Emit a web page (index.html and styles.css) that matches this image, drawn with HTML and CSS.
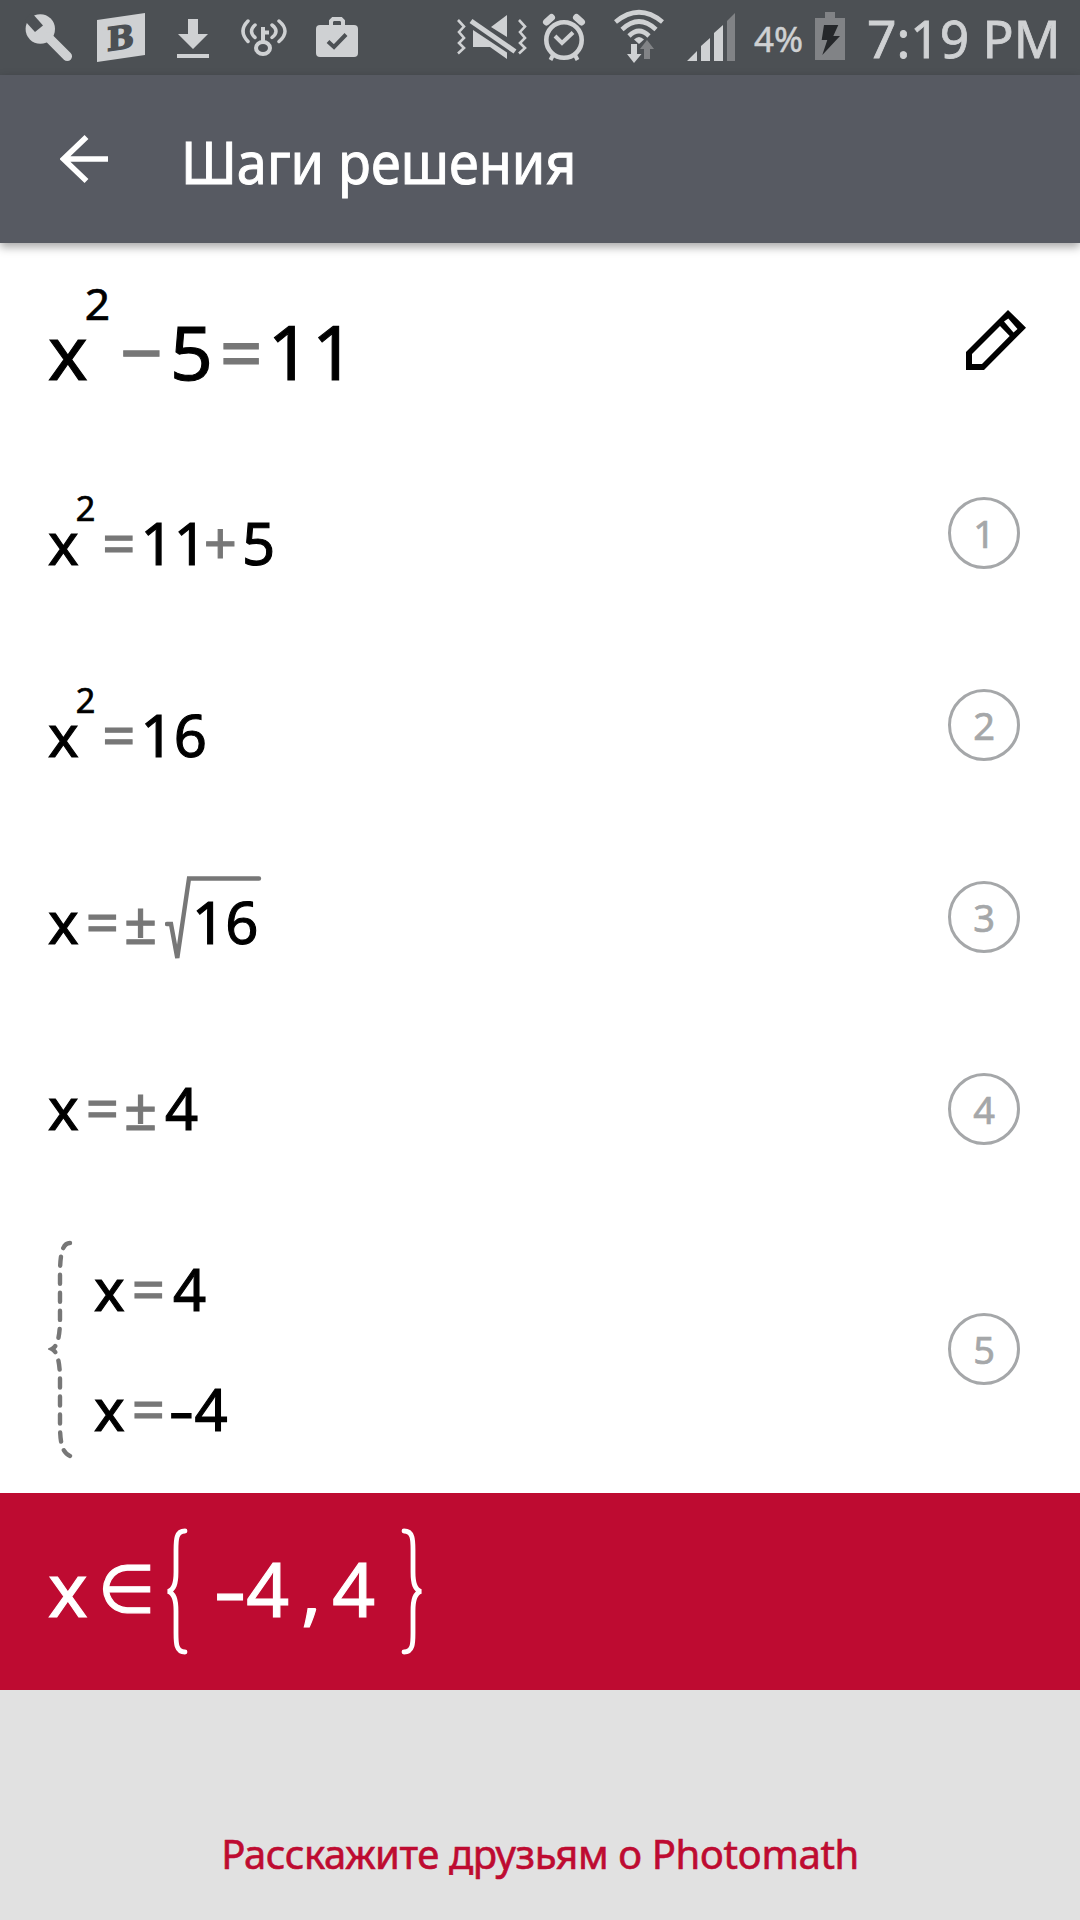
FILE: index.html
```html
<!DOCTYPE html>
<html lang="ru">
<head>
  <meta charset="UTF-8" />
  <meta name="viewport" content="width=device-width, initial-scale=1.0" />
  <title>Шаги решения</title>
  <link rel="stylesheet" href="styles.css">
</head>
<body>
  <div id="app">
    <div class="status">
      <svg class="i-wrench" viewBox="25 0 48 75">
        <circle cx="40.3" cy="29" r="14.7"/>
        <path class="cut" d="M24 20L35 32L43 25.5L32 13Z"/>
        <path class="line" stroke-width="9.5" stroke-linecap="round" d="M48 37L67.3 56.3"/>
      </svg>
      <svg class="i-b" viewBox="97 0 48 75">
        <path d="M97 20L145 13V55L97 62Z"/>
        <text class="cut" x="107" y="50.500" transform="matrix(1 -.14 0 1 0 15.6)">B</text>
      </svg>
      <svg class="i-down" viewBox="177 0 32 75">
        <path d="M188 19h10v15h10L193 49L178 34h10ZM177 54h32v4h-32Z"/>
      </svg>
      <svg class="i-key" viewBox="240 0 48 75">
        <ellipse class="line" stroke-width="4" cx="263" cy="48" rx="7" ry="6"/>
        <path class="line" stroke-width="4" d="M263 43V27M263 32.5H269"/>
        <path class="line" stroke-width="3.5" stroke-linecap="round" d="M248 21Q238 31 248 41.500M255 25Q248 31 255 37.500M279 21Q291 31 279 41.500M272 25Q280 31 272 37.500"/>
      </svg>
      <svg class="i-bag" viewBox="316 0 42 75">
        <rect x="316" y="25" width="42" height="32" rx="4"/>
        <path class="line" stroke-width="4" d="M331 26V21L333 19H341L343 21V26"/>
        <path class="line dark" stroke-width="4" d="M328 41.500L334 47L346 34.500"/>
      </svg>

      <svg class="i-mute" viewBox="456 0 72 75">
        <path class="line" stroke-width="2.6" d="M458 20L464 26.500L459 32L464 38L459 43L464 48L458 53.500M519 20L525 26.500L520 32L525 38L520 43L525 48L519 53.500"/>
        <path d="M491 27L507 15V37ZM473 30V47H490L507 59V52.500Z"/>
        <path class="line" stroke-width="5" d="M471 21L515 51.500"/>
      </svg>
      <svg class="i-alarm" viewBox="541 0 46 75">
        <circle class="line" stroke-width="4.6" cx="564" cy="40" r="17.7"/>
        <path class="line" stroke-width="4" d="M555 36L562 43L573 32.500M553.500 54L550.500 60M574.500 54L577.500 60"/>
        <path class="line" stroke-width="7" stroke-linecap="round" d="M546.500 22L551.500 17.500M581.500 22L576.500 17.500"/>
      </svg>
      <svg class="i-wifi" viewBox="613 0 52 75">
        <path class="line" stroke-width="4.6" d="M615.500 22Q639 2.500 662.500 22M622 29.500Q639 13.500 656 29.500M629 36Q639 26 649 36"/>
        <path d="M634 39.500Q639 34.500 644 39.500L639 44Z"/>
        <path d="M631 44h6v10h4.500L634 63L627 54h4Z"/>
        <path class="dim" d="M647 40L654 49h-4v10h-6V49h-4Z"/>
      </svg>
      <svg class="i-signal" viewBox="686 0 50 75">
        <path d="M687 61L697 51V61ZM701 61V46L710 38V61ZM714 61V33L723 25V61Z"/>
        <path class="dim" d="M727 61V21L735 13V61Z"/>
      </svg>
      <span class="percent">4%</span>
      <svg class="i-battery" viewBox="815 0 30 75">
        <path class="dim" d="M825 12h10v6h10v42h-30V18h10Z"/>
        <path class="bolt" d="M824 25H838.300L833.300 36H840L822.300 55L827.300 40H821.700Z"/>
      </svg>
      <span class="clock">7:19 PM</span>
    </div>

    <div class="appbar">
      <svg class="back" viewBox="60 134 48 50">
        <path d="M86.500 137L63.500 159L86.500 181M63.500 159H108"/>
      </svg>
      <h1>Шаги решения</h1>
    </div>

    <div class="row problem">
      <div class="math big"><span>x</span><span class="sup">2</span><span class="op minus">−</span><span>5</span><span class="op">=</span><span class="num">11</span></div>
      <svg class="pencil" viewBox="966 310 60 60">
        <path fill-rule="evenodd" d="M1008 310L1026 327.700L984 370H966V352ZM972 354V364H982L1009.700 336L1000 326ZM1004 321.500L1013.500 332.500L1017.500 329L1008.300 318.500Z"/>
      </svg>
    </div>

    <div class="row step low">
      <div class="math"><span>x</span><span class="sup">2</span><span class="op">=</span><span>11</span><span class="op plus">+</span><span>5</span></div>
      <div class="badge">1</div>
    </div>
    <div class="row step low">
      <div class="math"><span>x</span><span class="sup">2</span><span class="op">=</span><span>16</span></div>
      <div class="badge">2</div>
    </div>
    <div class="row step mid">
      <div class="math"><span>x</span><span class="op">=</span><span class="op pm">±</span><svg class="root" viewBox="165 873 97 88">
          <path d="M167 923H171L177.300 957L189 877.500H259"/>
        </svg><span class="radicand">16</span></div>
      <div class="badge">3</div>
    </div>
    <div class="row step">
      <div class="math"><span>x</span><span class="op">=</span><span class="op pm">±</span><span class="four">4</span></div>
      <div class="badge">4</div>
    </div>
    <div class="row step system">
      <svg class="dashed" viewBox="48 1239 26 220">
        <path d="M70 1243C62 1243 60 1255 60 1275V1318C60 1335 58 1346 52 1349C58 1352 60 1365 60 1380V1425C60 1445 63 1453 70 1456"/>
      </svg>
      <div class="cases">
        <div class="math"><span>x</span><span class="op">=</span><span class="four">4</span></div>
        <div class="math"><span>x</span><span class="op">=</span><span class="neg">-</span><span>4</span></div>
      </div>
      <div class="badge">5</div>
    </div>

    <div class="row result">
      <div class="math big"><span>x</span><span class="in">∈</span></div>
      <svg class="brace" viewBox="166 1528 24 127">
        <path d="M186 1531C177 1531 177 1540 177 1550V1572C177 1584 175 1590 169 1591.500C175 1593 177 1599 177 1611V1633C177 1643 177 1652 186 1652"/>
      </svg>
      <div class="math big set"><span class="neg">-</span><span>4</span><span class="comma">,</span><span>4</span></div>
      <svg class="brace" viewBox="400 1528 24 127">
        <path d="M404 1531C413 1531 413 1540 413 1550V1572C413 1584 415 1590 421 1591.500C415 1593 413 1599 413 1611V1633C413 1643 413 1652 404 1652"/>
      </svg>
    </div>

    <div class="share"><span>Расскажите друзьям о Photomath</span></div>
  </div>
</body>
</html>
```
FILE: styles.css
```css
:root {
  --status: #4c5054;
  --bar: #575a62;
  --icon: #cfd1d3;
  --dim: #818386;
  --op: #777;
  --badge: #a5a7a9;
  --red: #be0b31;
}
body {
  margin: 0;
  font-family: "Noto Sans", sans-serif;
  background: #fff;
  color: #000;
}
#app {
  width: 1080px;
  height: 1920px;
  display: flex;
  flex-direction: column;
  overflow: hidden;
}
svg {
  display: block;
  flex: none;
}

/* status bar */
.status {
  height: 75px;
  flex: none;
  display: flex;
  background: var(--status);
  color: var(--icon);
  line-height: 75px;
  white-space: nowrap;
}
.status svg {
  height: 75px;
  fill: var(--icon);
}
.status .line {
  fill: none;
  stroke: var(--icon);
}
.status .cut {
  fill: var(--status);
}
.status .dark {
  stroke: var(--status);
}
.status .dim {
  fill: var(--dim);
}
.status .bolt {
  fill: #25272a;
}
.i-wrench { width: 48px; margin-left: 25px; }
.i-b { width: 48px; margin-left: 24px; }
.i-b text {
  font: bold 32px "DejaVu Serif", serif;
  stroke: var(--status);
  stroke-width: 1.6;
}
.i-down { width: 32px; margin-left: 32px; }
.i-key { width: 48px; margin-left: 31px; }
.i-bag { width: 42px; margin-left: 28px; }
.i-mute { width: 72px; margin-left: 98px; }
.i-alarm { width: 46px; margin-left: 13px; }
.i-wifi { width: 52px; margin-left: 26px; }
.i-signal { width: 50px; margin-left: 21px; }
.percent {
  width: 61px;
  margin-left: 18px;
  font-size: 35px;
  line-height: 77px;
  -webkit-text-stroke: 0.5px;
}
.i-battery { width: 30px; }
.clock {
  margin-left: 22px;
  font-size: 51.5px;
  line-height: 77px;
  -webkit-text-stroke: 0.8px;
}

/* title bar */
.appbar {
  height: 168px;
  flex: none;
  display: flex;
  align-items: center;
  background: var(--bar);
  color: #fff;
  box-shadow: 0 4px 9px rgba(0, 0, 0, 0.35);
}
.back {
  width: 48px;
  height: 50px;
  margin-left: 60px;
}
.back path {
  fill: none;
  stroke: #fff;
  stroke-width: 5.6;
}
h1 {
  margin: 3px 0 0 73px;
  font-size: 59px;
  font-weight: normal;
  line-height: 80px;
  white-space: nowrap;
  transform: scaleX(0.915);
  transform-origin: left;
  -webkit-text-stroke: 1px;
}

/* solution rows */
.row {
  box-sizing: border-box;
  flex: none;
  display: flex;
  align-items: center;
  padding: 0 60px 0 48px;
}
.problem {
  height: 194px;
}
.step {
  height: 192px;
}
.math {
  display: flex;
  align-items: baseline;
  font-size: 58px;
  line-height: 120px;
  margin-top: -2px;
  white-space: nowrap;
  -webkit-text-stroke: 1.1px;
}
.low .math { margin-top: 19px; }
.mid .math { margin-top: 10px; }
.big { font-size: 75px; }
.problem .math { margin-top: 22px; }
.sup {
  font-size: 0.59em;
  line-height: 0;
  margin-left: -3px;
  align-self: flex-start;
  margin-top: 25px;
  -webkit-text-stroke: 0.7px;
}
.big .sup { margin-top: 12px; }
.op {
  color: var(--op);
  margin: 0 5px 0 7px;
}
.minus { margin: 0 7px 0 10px; }
.num { letter-spacing: 1.5px; }
.plus { margin-left: -3px; }
.pm { margin-left: 0; }
.four { margin-left: 3px; }
.neg {
  margin: 0 4px 0 2px;
  transform: scaleX(1.35);
}
.root {
  width: 97px;
  height: 88px;
  margin: -9px 0 0 3px;
  align-self: center;
}
.root path,
.dashed path {
  fill: none;
  stroke: var(--op);
  stroke-width: 4.4;
  stroke-linecap: round;
}
.radicand {
  margin-left: -70px;
}
.badge {
  box-sizing: border-box;
  width: 72px;
  height: 72px;
  margin-left: auto;
  border: 3px solid var(--badge);
  border-radius: 50%;
  color: var(--badge);
  font-size: 38px;
  line-height: 67px;
  text-align: center;
  -webkit-text-stroke: 0.7px;
}
.pencil {
  width: 60px;
  height: 60px;
  margin: 0 -6px 0 auto;
}
.system {
  height: 288px;
}
.dashed {
  width: 26px;
  height: 220px;
}
.dashed path {
  stroke-dasharray: 9 9;
}
.cases {
  margin-left: 20px;
}
.cases .math {
  margin-top: 0;
}

/* answer */
.result {
  height: 197px;
  background: var(--red);
  color: #fff;
}
.result .math {
  margin-top: -8px;
}
.in {
  font-family: "DejaVu Sans", sans-serif;
  font-size: 66px;
  line-height: 0;
  margin-left: 10px;
  transform: translateY(-5px);
}
.brace {
  width: 24px;
  height: 127px;
  margin-left: 10px;
}
.brace path {
  fill: none;
  stroke: #fff;
  stroke-width: 4.8;
  stroke-linecap: round;
}
.set {
  margin-left: 27px;
}
.set + .brace {
  margin-left: 25px;
}
.comma {
  margin: 0 11px 0 12px;
}

/* share link */
.share {
  flex: 1;
  background: #e1e1e1;
  color: var(--red);
  font-size: 40px;
  line-height: 60px;
  letter-spacing: -0.4px;
  text-align: center;
  padding-top: 134px;
  -webkit-text-stroke: 0.6px;
}
```
